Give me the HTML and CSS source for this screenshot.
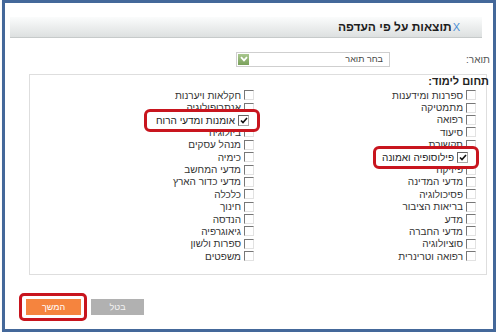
FILE: index.html
```html
<!DOCTYPE html>
<html lang="he" dir="rtl">
<head>
    <meta charset="UTF-8">
    <title>תוצאות על פי העדפה</title>
    <link rel="stylesheet" href="styles.css">
</head>
<body>
    <div class="frame">
        <div class="header">
            <span class="close">X</span>
            <span class="title">תוצאות על פי העדפה</span>
        </div>

        <div class="degree-row">
            <label class="degree-label">תואר:</label>
            <div class="select">
                <span class="select-text">בחר תואר</span>
                <span class="select-btn">
                    <svg width="8" height="6" viewBox="0 0 8 6"><path d="M1 1.2 L4 4.4 L7 1.2" fill="none" stroke="#fff" stroke-width="1.8"/></svg>
                </span>
            </div>
        </div>

        <div class="fieldset">
            <div class="legend">תחום לימוד:</div>
            <div class="columns">
                <div class="col">
                    <div class="item"><span class="cb"></span>ספרנות ומידענות</div>
                    <div class="item"><span class="cb"></span>מתמטיקה</div>
                    <div class="item"><span class="cb"></span>רפואה</div>
                    <div class="item"><span class="cb"></span>סיעוד</div>
                    <div class="item"><span class="cb"></span>תקשורת</div>
                    <div class="item"><span class="cb"></span>פילוסופיה ואמונה</div>
                    <div class="item"><span class="cb"></span>פיזיקה</div>
                    <div class="item"><span class="cb"></span>מדעי המדינה</div>
                    <div class="item"><span class="cb"></span>פסיכולוגיה</div>
                    <div class="item"><span class="cb"></span>בריאות הציבור</div>
                    <div class="item"><span class="cb"></span>מדע</div>
                    <div class="item"><span class="cb"></span>מדעי החברה</div>
                    <div class="item"><span class="cb"></span>סוציולוגיה</div>
                    <div class="item"><span class="cb"></span>רפואה וטרינרית</div>
                </div>
                <div class="col">
                    <div class="item"><span class="cb"></span>חקלאות ויערנות</div>
                    <div class="item"><span class="cb"></span>אנתרופולוגיה</div>
                    <div class="item"><span class="cb"></span>אומנות ומדעי הרוח</div>
                    <div class="item"><span class="cb"></span>ביולוגיה</div>
                    <div class="item"><span class="cb"></span>מנהל עסקים</div>
                    <div class="item"><span class="cb"></span>כימיה</div>
                    <div class="item"><span class="cb"></span>מדעי המחשב</div>
                    <div class="item"><span class="cb"></span>מדעי כדור הארץ</div>
                    <div class="item"><span class="cb"></span>כלכלה</div>
                    <div class="item"><span class="cb"></span>חינוך</div>
                    <div class="item"><span class="cb"></span>הנדסה</div>
                    <div class="item"><span class="cb"></span>גיאוגרפיה</div>
                    <div class="item"><span class="cb"></span>ספרות ולשון</div>
                    <div class="item"><span class="cb"></span>משפטים</div>
                </div>
            </div>
        </div>

        <div class="buttons">
            <button class="btn btn-cancel">בטל</button>
            <span class="highlight-btn"><button class="btn btn-next">המשך</button></span>
        </div>

        <!-- callouts over the selected items -->
        <div class="callout callout-arts">
            <span class="cb cb-big"><svg width="8" height="7" viewBox="0 0 8 7"><path d="M1 3.5 L3 5.6 L7 1" fill="none" stroke="#111" stroke-width="1.6"/></svg></span>
            <span>אומנות ומדעי הרוח</span>
        </div>
        <div class="callout callout-phil">
            <span class="cb cb-big"><svg width="8" height="7" viewBox="0 0 8 7"><path d="M1 3.5 L3 5.6 L7 1" fill="none" stroke="#111" stroke-width="1.6"/></svg></span>
            <span>פילוסופיה ואמונה</span>
        </div>
    </div>
</body>
</html>
```

FILE: styles.css
```css
body {
    margin: 0;
    background: #fff;
    font-family: "Liberation Sans", Arial, sans-serif;
    color: #333;
}
.frame {
    position: relative;
    width: 488px;
    height: 326px;
    border: 3px solid #44689a;
    box-shadow: 1px 1px 2px rgba(0,0,0,0.25);
    background: #fff;
}
.header {
    display: flex;
    align-items: center;
    height: 20px;
    margin: 14px 11px 0 5px;
    padding-right: 22px;
    background: linear-gradient(#fbfcfc, #dde0e0);
    border-bottom: 1px solid #c6caca;
}
.close {
    color: #4a8fd4;
    font-size: 11px;
    margin-left: 1px;
}
.title {
    font-size: 12px;
    font-weight: bold;
    color: #1e1e1e;
}
.degree-row {
    display: flex;
    align-items: center;
    margin-top: 14px;
    height: 14px;
}
.degree-label {
    width: 100px;
    padding-right: 3px;
    font-size: 10px;
    color: #555;
}
.select {
    display: flex;
    align-items: center;
    justify-content: space-between;
    width: 152px;
    height: 13px;
    border: 1px solid #cfcfcf;
    background: #fff;
}
.select-text {
    font-size: 9px;
    color: #444;
    padding-right: 6px;
}
.select-btn {
    display: flex;
    align-items: center;
    justify-content: center;
    width: 11px;
    height: 11px;
    margin-left: 1px;
    background: linear-gradient(#a9c78e, #79a05a);
}
.fieldset {
    margin: 8px 6px 0 24px;
    height: 199px;
    border: 1px solid #dedede;
}
.legend {
    font-size: 11px;
    font-weight: bold;
    color: #222;
    height: 13px;
    line-height: 13px;
    margin-right: -3px;
}
.columns {
    display: grid;
    grid-template-columns: 222px 222px;
    padding-top: 1px;
    padding-right: 10px;
}
.item {
    display: flex;
    align-items: center;
    gap: 3px;
    height: 12.4px;
    font-size: 10px;
    color: #333;
    white-space: nowrap;
}
.cb {
    display: inline-flex;
    align-items: center;
    justify-content: center;
    width: 8px;
    height: 8px;
    border-top: 1px solid #777;
    border-right: 1px solid #e2e2e2;
    border-left: 1px solid #777;
    border-bottom: 1px solid #e2e2e2;
    background: #fff;
    flex: none;
}
.cb-big {
    width: 9px;
    height: 9px;
    border-color: #666 #aaa #aaa #666;
}
.buttons {
    display: flex;
    justify-content: flex-end;
    align-items: center;
    gap: 4px;
    margin-top: 18px;
    padding-left: 14px;
}
.highlight-btn {
    display: flex;
    padding: 3px 3px 3px 4px;
    border: 3px solid #c8151e;
    border-radius: 5px;
}
.btn {
    width: 55px;
    height: 16px;
    border: none;
    padding: 0;
    font-family: "Liberation Sans", Arial, sans-serif;
    font-size: 9px;
    color: #fff;
}
.btn-next {
    background: #f5843e;
}
.btn-cancel {
    width: 53px;
    background: #b1b1b1;
    color: #f4f4f4;
}
.callout {
    position: absolute;
    display: flex;
    align-items: center;
    gap: 3px;
    box-sizing: border-box;
    height: 23px;
    padding-right: 8px;
    background: #fff;
    border: 3px solid #c8151e;
    border-radius: 6px;
    font-size: 10px;
    color: #222;
    white-space: nowrap;
}
.callout-arts {
    left: 139px;
    top: 106px;
    width: 116px;
}
.callout-phil {
    left: 368px;
    top: 143px;
    width: 106px;
}
```
